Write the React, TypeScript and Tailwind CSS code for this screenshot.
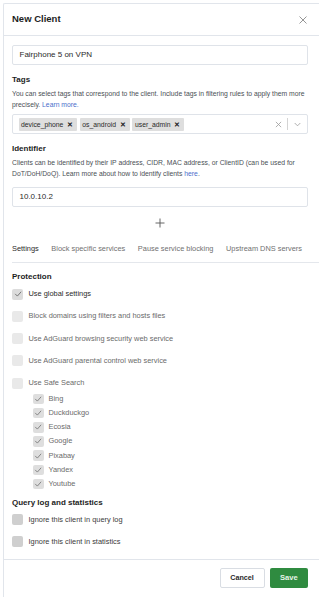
import React from "react";

const font = { fontFamily: '"Liberation Sans", Arial, sans-serif' };

function Check({ color = "#6b6b6b" }: { color?: string }) {
  return (
    <svg width="8" height="8" viewBox="0 0 10 10" fill="none">
      <polyline points="1.8,5.2 4.2,7.6 8.6,2.6" stroke={color} strokeWidth="1.1" strokeLinecap="round" strokeLinejoin="round" />
    </svg>
  );
}

function Box({ checked, tone }: { checked?: boolean; tone: "light" | "mid" | "dark" }) {
  const bg = tone === "light" ? "bg-[#e9e9e9]" : tone === "mid" ? "bg-[#dcdcdc]" : "bg-[#cfcfcf]";
  return (
    <div className={`w-[11px] h-[11px] rounded-[2px] flex items-center justify-center shrink-0 ${bg}`}>
      {checked ? <Check /> : null}
    </div>
  );
}

function Row({ label, checked, tone, text }: { label: string; checked?: boolean; tone: "light" | "mid" | "dark"; text: string }) {
  return (
    <div className="h-[12px] flex items-center">
      <Box checked={checked} tone={tone} />
      <span className={`ml-[5.5px] text-[7.4px] leading-[12px] whitespace-nowrap ${text}`}>{label}</span>
    </div>
  );
}

function SubRow({ label }: { label: string }) {
  return (
    <div className="h-[12px] flex items-center pl-[21px]">
      <div className="w-[10.5px] h-[10.5px] rounded-[2px] bg-[#dedede] flex items-center justify-center">
        <Check color="#7a7a7a" />
      </div>
      <span className="ml-[5px] text-[7.4px] leading-[12px] text-[#6a6a6a]">{label}</span>
    </div>
  );
}

function Chip({ label }: { label: string }) {
  return (
    <div className="h-[13px] flex items-center bg-[#dedede] rounded-[1px] pl-[2.5px] pr-[4px]">
      <span className="text-[6.8px] leading-[13px] text-[#2a2a2a]">{label}</span>
      <span className="ml-[4px] text-[6.5px] font-bold leading-[13px] text-[#222]">✕</span>
    </div>
  );
}

export default function App() {
  return (
    <div className="w-[319px] h-[600px] overflow-hidden bg-white pt-[3px] pl-[3px]" style={font}>
      <div className="w-[330px] border-l border-t border-[#e1e5eb] rounded-tl-[2px]">
        {/* Header */}
        <div className="h-[32px] border-b border-[#e1e5eb] flex items-center pl-[8px]">
          <div className="w-[296px] flex items-center justify-between">
            <span className="text-[9.5px] font-bold text-[#1d1d1d]">New Client</span>
            <svg width="8" height="8" viewBox="0 0 8 8" className="mr-[1px]">
              <path d="M0.5 0.5 L7.5 7.5 M7.5 0.5 L0.5 7.5" stroke="#8a8a8a" strokeWidth="0.9" />
            </svg>
          </div>
        </div>

        {/* Body */}
        <div className="pl-[8px] pt-[9px] pb-[11px]">
          <div className="w-[296px]">
            <div className="h-[20px] border border-[#dfe3e9] rounded-[2px] flex items-center pl-[6.5px]">
              <span className="text-[8px] text-[#2b2b2b]">Fairphone 5 on VPN</span>
            </div>

            <div className="mt-[9px] h-[12px] leading-[12px] text-[8px] font-bold text-[#1d1d1d]">Tags</div>
            <div className="mt-[2px] text-[6.8px] leading-[11px] text-[#4a4f55]">
              <div className="whitespace-nowrap">You can select tags that correspond to the client. Include tags in filtering rules to apply them more</div>
              <div className="flex gap-[1.9px] whitespace-nowrap">
                <span>precisely.</span>
                <span className="text-[#4b6fcb]">Learn more.</span>
              </div>
            </div>

            <div className="mt-[4px] h-[20px] border border-[#dfe3e9] rounded-[2px] flex items-center pl-[5.5px] pr-[6px]">
              <div className="flex items-center gap-[2.5px]">
                <Chip label="device_phone" />
                <Chip label="os_android" />
                <Chip label="user_admin" />
              </div>
              <div className="ml-auto flex items-center">
                <svg width="7" height="7" viewBox="0 0 8 8">
                  <path d="M1 1 L7 7 M7 1 L1 7" stroke="#9a9a9a" strokeWidth="0.9" />
                </svg>
                <div className="ml-[5px] w-px h-[12px] bg-[#d4d4d4]" />
                <svg width="7" height="5" viewBox="0 0 8 5" className="ml-[6px]">
                  <polyline points="0.8,0.8 4,4 7.2,0.8" fill="none" stroke="#9a9a9a" strokeWidth="0.9" />
                </svg>
              </div>
            </div>

            <div className="mt-[9px] h-[12px] leading-[12px] text-[8px] font-bold text-[#1d1d1d]">Identifier</div>
            <div className="mt-[2px] text-[6.8px] leading-[11px] text-[#4a4f55]">
              <div className="whitespace-nowrap">Clients can be identified by their IP address, CIDR, MAC address, or ClientID (can be used for</div>
              <div className="flex whitespace-nowrap">
                <span>DoT/DoH/DoQ). Learn more about how to identify clients&nbsp;</span>
                <span className="text-[#4b6fcb]">here</span>
                <span>.</span>
              </div>
            </div>

            <div className="mt-[8px] h-[20px] border border-[#dfe3e9] rounded-[2px] flex items-center pl-[6.5px]">
              <span className="text-[8px] text-[#2b2b2b]">10.0.10.2</span>
            </div>

            <div className="mt-[6px] h-[20px] flex items-center justify-center">
              <svg width="10" height="10" viewBox="0 0 10 10">
                <path d="M5 0.5 V9.5 M0.5 5 H9.5" stroke="#555" strokeWidth="0.9" />
              </svg>
            </div>
          </div>

          {/* Tabs */}
          <div className="w-[330px] pt-[10px] pb-[7px] border-b border-[#e4e7ec] flex gap-[12.6px]">
            <span className="text-[7.4px] leading-[12px] text-[#2a2a2a]">Settings</span>
            <span className="text-[7.4px] leading-[12px] text-[#707070]">Block specific services</span>
            <span className="text-[7.4px] leading-[12px] text-[#707070]">Pause service blocking</span>
            <span className="text-[7.4px] leading-[12px] text-[#707070]">Upstream DNS servers</span>
          </div>

          <div className="mt-[8px] h-[12px] leading-[12px] text-[8px] font-bold text-[#1d1d1d]">Protection</div>

          <div className="mt-[5px] flex flex-col gap-[10.25px]">
            <Row label="Use global settings" checked tone="mid" text="text-[#2a2a2a]" />
            <Row label="Block domains using filters and hosts files" tone="light" text="text-[#6a6a6a]" />
            <Row label="Use AdGuard browsing security web service" tone="light" text="text-[#6a6a6a]" />
            <Row label="Use AdGuard parental control web service" tone="light" text="text-[#6a6a6a]" />
            <Row label="Use Safe Search" tone="light" text="text-[#6a6a6a]" />
          </div>

          <div className="mt-[4px] flex flex-col gap-[2.17px]">
            <SubRow label="Bing" />
            <SubRow label="Duckduckgo" />
            <SubRow label="Ecosia" />
            <SubRow label="Google" />
            <SubRow label="Pixabay" />
            <SubRow label="Yandex" />
            <SubRow label="Youtube" />
          </div>

          <div className="mt-[7px] h-[12px] leading-[12px] text-[8px] font-bold text-[#1d1d1d]">Query log and statistics</div>

          <div className="mt-[5px] flex flex-col gap-[10px]">
            <Row label="Ignore this client in query log" tone="dark" text="text-[#3a3a3a]" />
            <Row label="Ignore this client in statistics" tone="dark" text="text-[#3a3a3a]" />
          </div>
        </div>

        {/* Footer */}
        <div className="border-t border-[#e1e5eb] pt-[8px] pb-[9px] pl-[8px]">
          <div className="w-[296px] flex justify-end gap-[5px]">
            <div className="w-[45px] h-[20px] border border-[#d9dde3] rounded-[2px] bg-white flex items-center justify-center">
              <span className="text-[7.2px] font-bold text-[#2a2a2a]">Cancel</span>
            </div>
            <div className="w-[38.5px] h-[20px] rounded-[2px] bg-[#2f8b40] flex items-center justify-center">
              <span className="text-[7.6px] font-bold text-[#e6f4e8]">Save</span>
            </div>
          </div>
        </div>
      </div>
    </div>
  );
}
